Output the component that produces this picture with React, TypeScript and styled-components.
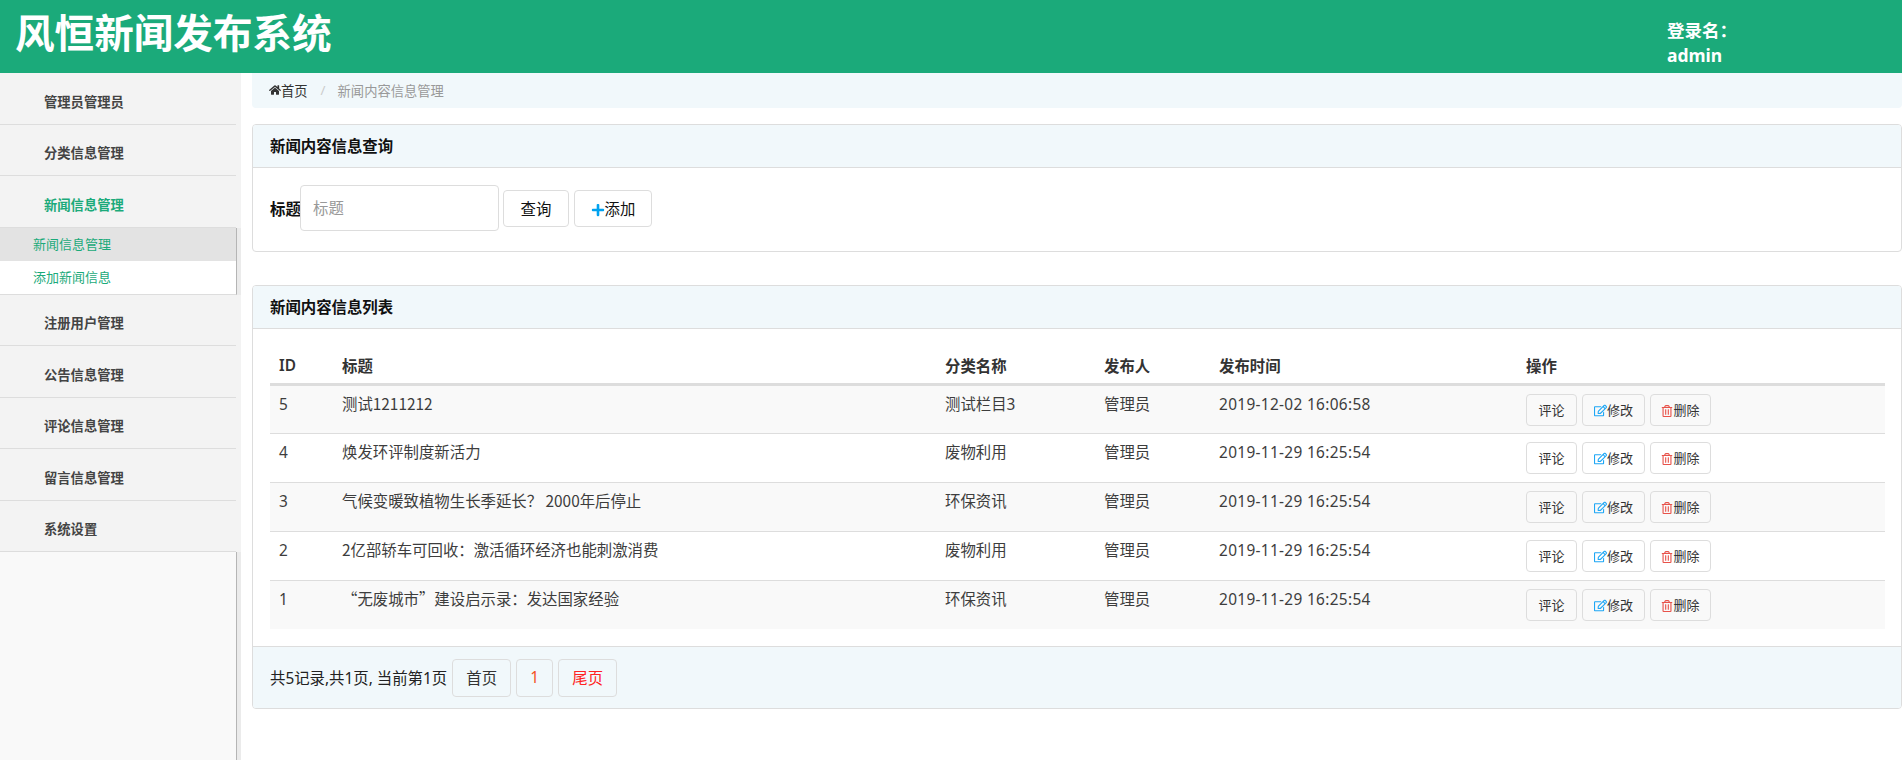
import { FunctionComponent } from 'react';
import styled, { createGlobalStyle } from 'styled-components';
import { FaHome, FaPlus, FaRegEdit, FaRegTrashAlt } from 'react-icons/fa';

const GlobalStyle = createGlobalStyle`
  html, body {
    margin: 0;
    padding: 0;
    background: #fff;
  }
  body {
    font-family: "Noto Sans", "Noto Sans CJK SC", sans-serif;
    font-size: 14px;
    color: #333;
  }
  * {
    box-sizing: border-box;
  }
`;

const Page = styled.div`
  height: 760px;
  overflow: hidden;
  display: flex;
  flex-direction: column;
`;

const Header = styled.header`
  height: 73px;
  flex: none;
  background: #1baa7a;
  color: #fff;
  display: flex;
  justify-content: space-between;
`;

const Logo = styled.h1`
  margin: 0;
  padding-left: 15px;
  font-size: 39.6px;
  line-height: 66px;
  font-weight: 700;
`;

const UserBox = styled.div`
  width: 235px;
  padding-top: 18px;
  font-size: 17.5px;
  line-height: 25px;
  font-weight: 700;
`;

const Body = styled.div`
  flex: 1;
  display: flex;
  min-height: 0;
`;

const Sidebar = styled.nav`
  width: 241px;
  flex: none;
  display: flex;
  flex-direction: column;
  background: #ebebeb;
`;

const NavItem = styled.div`
  background: #f3f3f3;
`;

const NavTitle = styled.div<{ $active?: boolean }>`
  height: 51.5px;
  margin-right: 5px;
  padding: 19.5px 0 0 44px;
  border-bottom: 1px solid #ddd;
  font-size: 13.3px;
  line-height: 18px;
  font-weight: 600;
  color: ${(p) => (p.$active ? '#1baa7a' : '#444')};
`;

const SubMenu = styled.div`
  margin-right: 4px;
  border-right: 1px solid #b5b5b5;
  border-bottom: 1px solid #ddd;
`;

const SubItem = styled.div<{ $current?: boolean }>`
  height: 33px;
  padding-left: 33px;
  font-size: 13px;
  line-height: 33px;
  color: #1baa7a;
  background: ${(p) => (p.$current ? '#e3e3e3' : '#fff')};
`;

const SideRest = styled.div`
  flex: 1;
  margin-right: 4px;
  background: #f9f9f9;
  border-right: 1px solid #b5b5b5;
`;

const Main = styled.main`
  flex: 1;
  min-width: 0;
  padding-left: 11px;
`;

const Breadcrumb = styled.div`
  height: 35px;
  padding: 0 0 1px 17px;
  display: flex;
  align-items: center;
  background: #f1f8fb;
  border-radius: 0 0 4px 4px;
  font-size: 13.3px;
  color: #333;
  svg {
    font-size: 12px;
    color: #333;
  }
`;

const Slash = styled.span`
  margin: 0 12px 0 13px;
  color: #ccc;
`;

const CrumbNow = styled.span`
  color: #999;
`;

const Panel = styled.section<{ $gap: number }>`
  margin-top: ${(p) => p.$gap}px;
  border: 1px solid #ddd;
  border-radius: 4px;
  overflow: hidden;
`;

const PanelHeading = styled.div`
  height: 43px;
  padding-left: 17px;
  background: #f1f8fb;
  border-bottom: 1px solid #ddd;
  font-size: 15.4px;
  line-height: 43px;
  font-weight: 700;
  color: #111;
`;

const SearchForm = styled.form`
  height: 83px;
  padding: 0 0 3px 17px;
  display: flex;
  align-items: center;
  font-size: 15.4px;
`;

const SearchLabel = styled.label`
  width: 30px;
  white-space: nowrap;
  font-weight: 600;
  color: #111;
`;

const SearchInput = styled.input`
  width: 199px;
  height: 46px;
  padding: 0 12px;
  border: 1px solid #ddd;
  border-radius: 4px;
  font: inherit;
  outline: none;
  &::placeholder {
    color: #999;
  }
`;

const ToolButton = styled.button<{ $width: number }>`
  width: ${(p) => p.$width}px;
  height: 37px;
  margin-left: ${(p) => (p.$width > 70 ? 5 : 4)}px;
  padding: 0;
  border: 1px solid #ddd;
  border-radius: 4px;
  background: #fff;
  color: #111;
  font: inherit;
  svg {
    font-size: 14px;
    color: #00a2ef;
    vertical-align: -2px;
  }
`;

const TableWrap = styled.div`
  padding: 13px 17px 17px;
`;

const Table = styled.table`
  width: 100%;
  table-layout: fixed;
  border-collapse: collapse;
  font-size: 15.4px;
  color: #3d3d3d;
`;

const Th = styled.th`
  height: 42px;
  padding: 6px 9px 0;
  border-bottom: 3px solid #ddd;
  text-align: left;
  font-weight: 600;
  color: #333;
`;

const Tr = styled.tr`
  height: 49px;
  border-top: 1px solid #ddd;
  &:nth-child(odd) {
    background: #f9f9f9;
  }
`;

const Td = styled.td`
  padding: 8px 9px 0;
  vertical-align: top;
  line-height: 22px;
`;

const TitleCell = styled(Td)`
  padding-top: 6px;
  font-family: "Noto Sans CJK SC", sans-serif;
`;

const TimeCell = styled(Td)`
  letter-spacing: 0.33px;
`;

const Actions = styled.div`
  display: flex;
  gap: 5px;
`;

const ActionButton = styled.button<{ $width: number; $icon?: string; $iconSize?: number }>`
  width: ${(p) => p.$width}px;
  height: 32px;
  padding: 0;
  border: 1px solid #ddd;
  border-radius: 4px;
  background: transparent;
  color: #333;
  font-size: 13px;
  font-family: inherit;
  svg {
    font-size: ${(p) => p.$iconSize || 13}px;
    color: ${(p) => p.$icon || '#333'};
    vertical-align: -2px;
  }
`;

const PanelFooter = styled.div`
  height: 62px;
  padding-left: 17px;
  display: flex;
  align-items: center;
  gap: 5px;
  background: #f1f8fb;
  border-top: 1px solid #ddd;
  font-size: 15.4px;
  color: #222;
`;

const PageButton = styled.button<{ $width: number; $color?: string }>`
  width: ${(p) => p.$width}px;
  height: 38px;
  padding: 0;
  border: 1px solid #ddd;
  border-radius: 4px;
  background: transparent;
  color: ${(p) => p.$color || '#333'};
  font-size: 15.4px;
  font-family: inherit;
`;

const menus = ['注册用户管理', '公告信息管理', '评论信息管理', '留言信息管理', '系统设置'];

const rows = [
  { id: 5, title: '测试1211212', category: '测试栏目3', time: '2019-12-02 16:06:58' },
  { id: 4, title: '焕发环评制度新活力', category: '废物利用', time: '2019-11-29 16:25:54' },
  { id: 3, title: '气候变暖致植物生长季延长？ 2000年后停止', category: '环保资讯', time: '2019-11-29 16:25:54' },
  { id: 2, title: '2亿部轿车可回收：激活循环经济也能刺激消费', category: '废物利用', time: '2019-11-29 16:25:54' },
  { id: 1, title: '“无废城市”建设启示录：发达国家经验', category: '环保资讯', time: '2019-11-29 16:25:54' },
];

const columns = [63, 603, 159, 115, 307, 368];

const App: FunctionComponent = () => {
  return (
    <Page>
      <GlobalStyle />
      <Header>
        <Logo>风恒新闻发布系统</Logo>
        <UserBox>
          登录名：
          <br />
          admin
        </UserBox>
      </Header>
      <Body>
        <Sidebar>
          <NavItem>
            <NavTitle>管理员管理员</NavTitle>
          </NavItem>
          <NavItem>
            <NavTitle>分类信息管理</NavTitle>
          </NavItem>
          <NavItem>
            <NavTitle $active>新闻信息管理</NavTitle>
          </NavItem>
          <SubMenu>
            <SubItem $current>新闻信息管理</SubItem>
            <SubItem>添加新闻信息</SubItem>
          </SubMenu>
          {menus.map((m) => (
            <NavItem key={m}>
              <NavTitle>{m}</NavTitle>
            </NavItem>
          ))}
          <SideRest />
        </Sidebar>
        <Main>
          <Breadcrumb>
            <FaHome />
            首页
            <Slash>/</Slash>
            <CrumbNow>新闻内容信息管理</CrumbNow>
          </Breadcrumb>
          <Panel $gap={16}>
            <PanelHeading>新闻内容信息查询</PanelHeading>
            <SearchForm>
              <SearchLabel>标题</SearchLabel>
              <SearchInput placeholder="标题" />
              <ToolButton type="button" $width={66}>
                查询
              </ToolButton>
              <ToolButton type="button" $width={78}>
                <FaPlus />
                添加
              </ToolButton>
            </SearchForm>
          </Panel>
          <Panel $gap={33}>
            <PanelHeading>新闻内容信息列表</PanelHeading>
            <TableWrap>
              <Table>
                <colgroup>
                  {columns.map((w, i) => (
                    <col key={i} width={w} />
                  ))}
                </colgroup>
                <thead>
                  <tr>
                    <Th>ID</Th>
                    <Th>标题</Th>
                    <Th>分类名称</Th>
                    <Th>发布人</Th>
                    <Th>发布时间</Th>
                    <Th>操作</Th>
                  </tr>
                </thead>
                <tbody>
                  {rows.map((r) => (
                    <Tr key={r.id}>
                      <Td>{r.id}</Td>
                      <TitleCell>{r.title}</TitleCell>
                      <Td>{r.category}</Td>
                      <Td>管理员</Td>
                      <TimeCell>{r.time}</TimeCell>
                      <Td>
                        <Actions>
                          <ActionButton $width={51}>评论</ActionButton>
                          <ActionButton $width={63} $icon="#1ea7f5">
                            <FaRegEdit />
                            修改
                          </ActionButton>
                          <ActionButton $width={61} $icon="#e8524a" $iconSize={12}>
                            <FaRegTrashAlt />
                            删除
                          </ActionButton>
                        </Actions>
                      </Td>
                    </Tr>
                  ))}
                </tbody>
              </Table>
            </TableWrap>
            <PanelFooter>
              共5记录,共1页, 当前第1页
              <PageButton $width={59}>首页</PageButton>
              <PageButton $width={37} $color="#f4511e">
                1
              </PageButton>
              <PageButton $width={59} $color="#f22">
                尾页
              </PageButton>
            </PanelFooter>
          </Panel>
        </Main>
      </Body>
    </Page>
  );
};

export default App;
